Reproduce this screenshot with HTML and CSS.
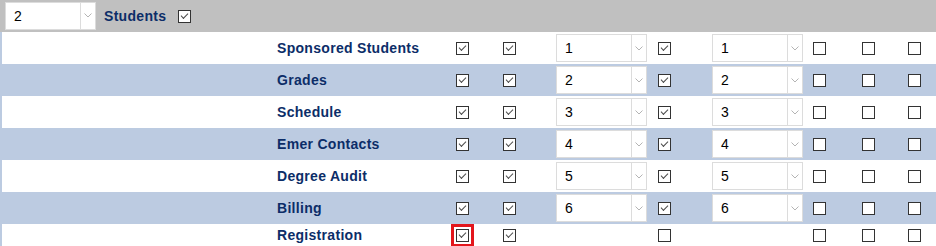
FILE: index.html
```html
<!DOCTYPE html>
<html lang="en">
<head>
    <meta charset="UTF-8">
    <title>Students</title>
    <link rel="stylesheet" href="styles.css">
</head>
<body>
    <div class="header">
        <div class="select header-select">
            <span class="value">2</span>
            <span class="arrow"><svg width="8" height="5" viewBox="0 0 8 5"><polyline points="0.5,0.5 4,4 7.5,0.5" /></svg></span>
        </div>
        <span class="title">Students</span>
        <input type="checkbox" checked>
    </div>

    <div class="grid">
        <div class="row">
            <span class="label">Sponsored Students</span>
            <input type="checkbox" checked>
            <input type="checkbox" checked>
            <div class="select"><span class="value">1</span><span class="arrow"><svg width="8" height="5" viewBox="0 0 8 5"><polyline points="0.5,0.5 4,4 7.5,0.5" /></svg></span></div>
            <input type="checkbox" checked>
            <div class="select"><span class="value">1</span><span class="arrow"><svg width="8" height="5" viewBox="0 0 8 5"><polyline points="0.5,0.5 4,4 7.5,0.5" /></svg></span></div>
            <input type="checkbox">
            <input type="checkbox">
            <input type="checkbox">
        </div>
        <div class="row alt">
            <span class="label">Grades</span>
            <input type="checkbox" checked>
            <input type="checkbox" checked>
            <div class="select"><span class="value">2</span><span class="arrow"><svg width="8" height="5" viewBox="0 0 8 5"><polyline points="0.5,0.5 4,4 7.5,0.5" /></svg></span></div>
            <input type="checkbox" checked>
            <div class="select"><span class="value">2</span><span class="arrow"><svg width="8" height="5" viewBox="0 0 8 5"><polyline points="0.5,0.5 4,4 7.5,0.5" /></svg></span></div>
            <input type="checkbox">
            <input type="checkbox">
            <input type="checkbox">
        </div>
        <div class="row">
            <span class="label">Schedule</span>
            <input type="checkbox" checked>
            <input type="checkbox" checked>
            <div class="select"><span class="value">3</span><span class="arrow"><svg width="8" height="5" viewBox="0 0 8 5"><polyline points="0.5,0.5 4,4 7.5,0.5" /></svg></span></div>
            <input type="checkbox" checked>
            <div class="select"><span class="value">3</span><span class="arrow"><svg width="8" height="5" viewBox="0 0 8 5"><polyline points="0.5,0.5 4,4 7.5,0.5" /></svg></span></div>
            <input type="checkbox">
            <input type="checkbox">
            <input type="checkbox">
        </div>
        <div class="row alt">
            <span class="label">Emer Contacts</span>
            <input type="checkbox" checked>
            <input type="checkbox" checked>
            <div class="select"><span class="value">4</span><span class="arrow"><svg width="8" height="5" viewBox="0 0 8 5"><polyline points="0.5,0.5 4,4 7.5,0.5" /></svg></span></div>
            <input type="checkbox" checked>
            <div class="select"><span class="value">4</span><span class="arrow"><svg width="8" height="5" viewBox="0 0 8 5"><polyline points="0.5,0.5 4,4 7.5,0.5" /></svg></span></div>
            <input type="checkbox">
            <input type="checkbox">
            <input type="checkbox">
        </div>
        <div class="row">
            <span class="label">Degree Audit</span>
            <input type="checkbox" checked>
            <input type="checkbox" checked>
            <div class="select"><span class="value">5</span><span class="arrow"><svg width="8" height="5" viewBox="0 0 8 5"><polyline points="0.5,0.5 4,4 7.5,0.5" /></svg></span></div>
            <input type="checkbox" checked>
            <div class="select"><span class="value">5</span><span class="arrow"><svg width="8" height="5" viewBox="0 0 8 5"><polyline points="0.5,0.5 4,4 7.5,0.5" /></svg></span></div>
            <input type="checkbox">
            <input type="checkbox">
            <input type="checkbox">
        </div>
        <div class="row alt">
            <span class="label">Billing</span>
            <input type="checkbox" checked>
            <input type="checkbox" checked>
            <div class="select"><span class="value">6</span><span class="arrow"><svg width="8" height="5" viewBox="0 0 8 5"><polyline points="0.5,0.5 4,4 7.5,0.5" /></svg></span></div>
            <input type="checkbox" checked>
            <div class="select"><span class="value">6</span><span class="arrow"><svg width="8" height="5" viewBox="0 0 8 5"><polyline points="0.5,0.5 4,4 7.5,0.5" /></svg></span></div>
            <input type="checkbox">
            <input type="checkbox">
            <input type="checkbox">
        </div>
        <div class="row last">
            <span class="label">Registration</span>
            <input type="checkbox" class="highlight" checked>
            <input type="checkbox" checked>
            <span></span>
            <input type="checkbox">
            <span></span>
            <input type="checkbox">
            <input type="checkbox">
            <input type="checkbox">
        </div>
    </div>
</body>
</html>
```

FILE: styles.css
```css
body {
    margin: 0;
    padding: 0;
    background-color: #ffffff;
    font-family: "Liberation Sans", Arial, sans-serif;
    overflow: hidden;
}

/* Thanh tiêu đề xám */
.header {
    display: flex;
    align-items: center;
    height: 32px;
    padding-left: 5px;
    background-color: #c0c0c0;
}

.header .title {
    margin-left: 8px;
    font-size: 14px;
    font-weight: bold;
    letter-spacing: 0.3px;
    color: #0c2d68;
}

.header input[type="checkbox"] {
    margin-left: 12px;
}

/* Ô chọn giả */
.select {
    display: flex;
    width: 91px;
    height: 28px;
    box-sizing: border-box;
    border: 1px solid #dcdcdc;
    background-color: #ffffff;
}

.header-select {
    margin-top: -1px;
}

.select .value {
    flex: 1;
    padding-left: 8px;
    font-size: 14px;
    line-height: 26px;
    color: #000000;
}

.select .arrow {
    width: 14px;
    display: flex;
    align-items: center;
    justify-content: center;
    border-left: 1px solid #dcdcdc;
}

.select .arrow polyline {
    fill: none;
    stroke: #b4b4b4;
    stroke-width: 1;
}

/* Bảng quyền */
.grid {
    background-color: #bccbe1;
}

.row {
    display: grid;
    grid-template-columns: 179px 47px 53px 102px 54px 101px 49px 46px 1fr;
    align-items: center;
    height: 32px;
    padding-left: 275px;
    border-left: 2px solid #bccbe1;
    background-color: #ffffff;
}

.row.alt {
    background-color: #bccbe1;
}

/* Dòng cuối bị cắt trong ảnh */
.row.last {
    height: 22px;
}

.row .label {
    font-size: 14px;
    font-weight: bold;
    letter-spacing: 0.3px;
    color: #0c2d68;
}

/* Ô đánh dấu kiểu cổ điển */
input[type="checkbox"] {
    appearance: none;
    -webkit-appearance: none;
    position: relative;
    width: 13px;
    height: 13px;
    margin: 0;
    border: 1px solid #333333;
    background-color: #ffffff;
}

input[type="checkbox"]:checked::after {
    content: "";
    position: absolute;
    left: 2px;
    top: 2px;
    width: 6px;
    height: 3px;
    border-left: 1.5px solid #4a4a4a;
    border-bottom: 1.5px solid #4a4a4a;
    transform: rotate(-45deg);
}

input.highlight {
    outline: 3px solid #e3161c;
    outline-offset: 2px;
}
```
